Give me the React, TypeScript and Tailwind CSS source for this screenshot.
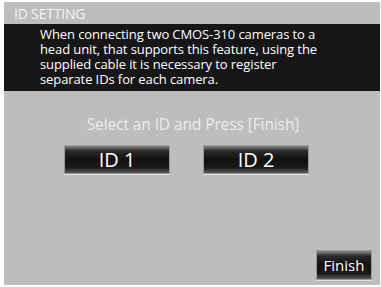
export default function App() {
  const btn =
    "flex items-center justify-center border border-[#9a9a9a] bg-[linear-gradient(to_bottom,#8a8a8a_0%,#2a2a2a_18%,#111_50%,#1a1a1a_80%,#5a5a5a_100%)] text-white shadow-[0_1px_0_#e0e0e0]";
  return (
    <div className="w-[381px] h-[287px] bg-white pl-[4px] pt-[2px] font-['Open_Sans',sans-serif]">
      <div className="w-[376px] h-[283px] bg-[#bdbdbd] flex flex-col">
        <div className="h-[22px] pl-[10px] flex items-center text-[14px] text-[#f4f4f4] tracking-[-0.2px]">
          ID SETTING
        </div>
        <div className="h-[67px] bg-[#161616] pl-[36px] pt-[3px] text-[13px] leading-[15px] text-white tracking-[-0.1px]">
          <p>When connecting two CMOS-310 cameras to a</p>
          <p>head unit, that supports this feature, using the</p>
          <p>supplied cable it is necessary to register</p>
          <p>separate IDs for each camera.</p>
        </div>
        <div className="mt-[23px] text-center text-[15.5px] leading-[20px] text-[#ebebeb] pl-[2px] tracking-[-0.1px]">
          Select an ID and Press [Finish]
        </div>
        <div className="mt-[11px] flex pl-[60px] gap-[33px]">
          <div className={`${btn} w-[106px] h-[29px] text-[20px]`}>ID 1</div>
          <div className={`${btn} w-[106px] h-[29px] text-[20px]`}>ID 2</div>
        </div>
        <div className="mt-auto mb-[5px] flex justify-end pr-[8px]">
          <div className={`${btn} w-[56px] h-[30px] text-[15px]`}>Finish</div>
        </div>
      </div>
    </div>
  );
}
